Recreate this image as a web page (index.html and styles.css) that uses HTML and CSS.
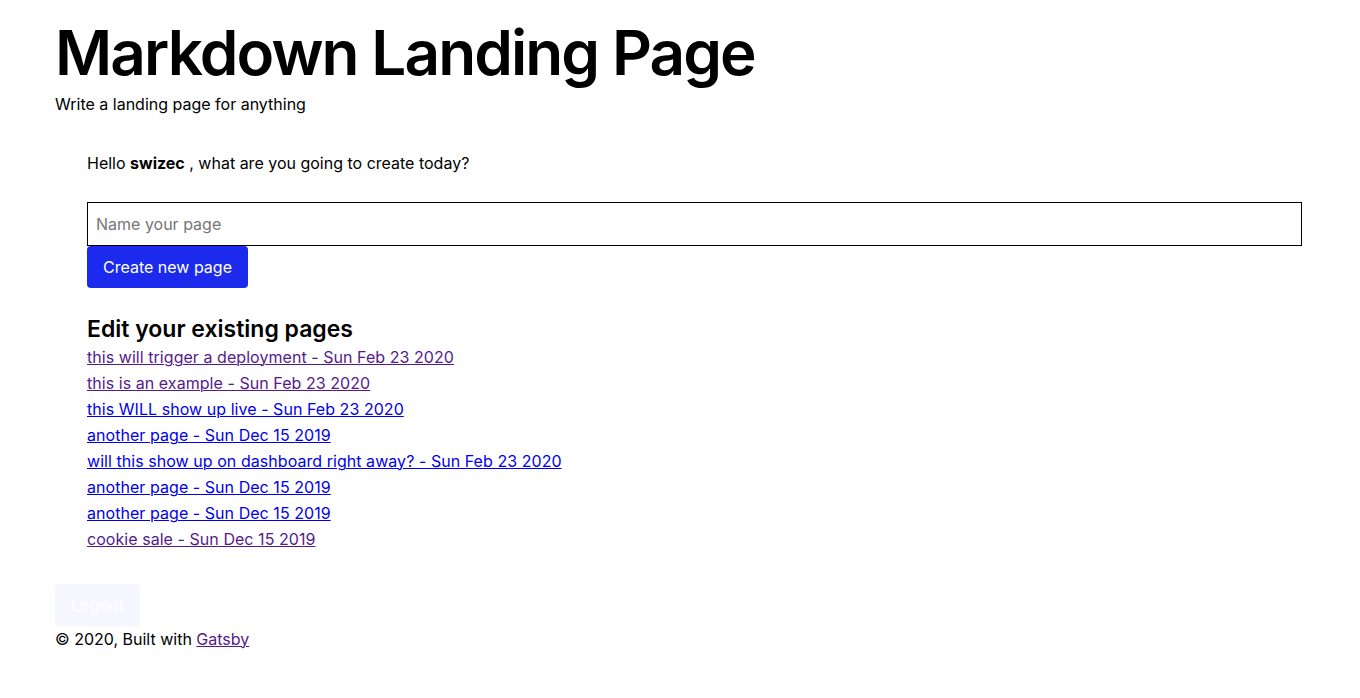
FILE: index.html
```html
<!DOCTYPE html>
<html lang="en">
<head>
<meta charset="utf-8">
<title>Markdown Landing Page</title>
<link rel="stylesheet" href="styles.css">
</head>
<body>
<div class="layout">
  <header class="site-header">
    <h1 class="site-title">Markdown Landing Page</h1>
    <p class="site-tagline">Write a landing page for anything</p>
  </header>
  <main class="dashboard">
    <p class="greeting">Hello <strong>swizec</strong> , what are you going to create today?</p>
    <form class="create-form">
      <input class="name-input" type="text" placeholder="Name your page">
      <button class="btn-primary" type="button">Create new page</button>
    </form>
    <h2 class="pages-title">Edit your existing pages</h2>
    <ul class="pages-list">
      <li><a class="visited" href="#">this will trigger a deployment - Sun Feb 23 2020</a></li>
      <li><a class="visited" href="#">this is an example - Sun Feb 23 2020</a></li>
      <li><a href="#">this WILL show up live - Sun Feb 23 2020</a></li>
      <li><a href="#">another page - Sun Dec 15 2019</a></li>
      <li><a href="#">will this show up on dashboard right away? - Sun Feb 23 2020</a></li>
      <li><a href="#">another page - Sun Dec 15 2019</a></li>
      <li><a href="#">another page - Sun Dec 15 2019</a></li>
      <li><a class="visited" href="#">cookie sale - Sun Dec 15 2019</a></li>
    </ul>
  </main>
  <div class="logout-row">
    <button class="btn-logout" type="button">Logout</button>
  </div>
  <footer class="site-footer">© 2020, Built with <a class="visited" href="#">Gatsby</a></footer>
</div>
</body>
</html>
```

FILE: styles.css
```css
* { box-sizing: border-box; }
html, body { margin: 0; padding: 0; background: #fff; }
body {
  font-family: Inter, "Noto Sans", sans-serif;
  color: #000;
  font-size: 16px;
  line-height: 26px;
}
.layout {
  padding: 16px 58px 40px 55px;
}
.site-title {
  margin: 0;
  font-size: 62px;
  font-weight: 600;
  line-height: 1.2;
  letter-spacing: -1.9px;
}
.site-tagline {
  margin: 1px 0 0;
  font-size: 16px;
}
.dashboard {
  padding: 33px 0 0 32px;
}
.greeting {
  margin: 0;
}
.create-form {
  margin-top: 26px;
  display: flex;
  flex-direction: column;
  align-items: flex-start;
}
.name-input {
  width: 100%;
  height: 44px;
  border: 1px solid #000;
  border-radius: 0;
  padding: 0 8px;
  font-family: inherit;
  font-size: 16px;
  color: #000;
  outline: none;
}
.name-input::placeholder { color: #767676; }
.btn-primary {
  height: 42px;
  padding: 0 16px;
  border: 0;
  border-radius: 4px;
  background: #1b2aec;
  color: #fff;
  font-family: inherit;
  font-size: 16px;
}
.pages-title {
  margin: 28px 0 0;
  font-size: 23px;
  font-weight: 600;
  line-height: 1.2;
}
.pages-list {
  list-style: none;
  margin: 0;
  padding: 0;
}
.pages-list li {
  line-height: 26px;
  letter-spacing: 0.05px;
}
a { color: #0000ee; text-decoration: underline; text-decoration-thickness: 1px; }
a.visited { color: #551a8b; }
.logout-row {
  margin-top: 32px;
}
.btn-logout {
  display: block;
  height: 42px;
  padding: 0 16px;
  border: 0;
  border-radius: 4px;
  background: #f5f6ff;
  color: #fff;
  font-family: inherit;
  font-size: 16px;
}
.site-footer {
  margin: 0;
}
```
